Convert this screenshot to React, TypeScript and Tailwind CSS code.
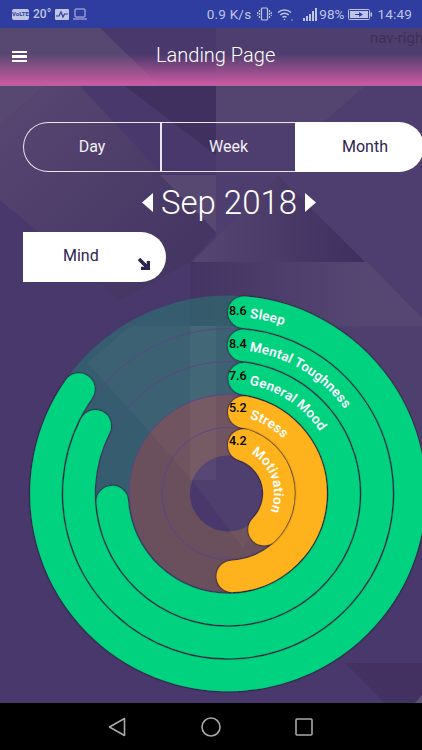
const GREEN = "#00d27f";
const ORANGE = "#feb31c";
const CX = 228;
const CY = 203.5;

function pt(r: number, deg: number) {
  const a = (deg * Math.PI) / 180;
  return [CX + r * Math.sin(a), CY - r * Math.cos(a)];
}

function arc(r: number, from: number, to: number) {
  const [x1, y1] = pt(r, from);
  const [x2, y2] = pt(r, to);
  const large = to - from > 180 ? 1 : 0;
  return `M${x1.toFixed(2)} ${y1.toFixed(2)} A${r} ${r} 0 ${large} 1 ${x2.toFixed(2)} ${y2.toFixed(2)}`;
}

const rings = [
  { id: "sleep", label: "Sleep", value: "8.6", r: 182, from: 5, to: 305, color: GREEN, textR: 177, textFrom: 7, vy: 25 },
  { id: "tough", label: "Mental Toughness", value: "8.4", r: 149, from: 6, to: 297, color: GREEN, textR: 144, textFrom: 8.5, vy: 58 },
  { id: "mood", label: "General Mood", value: "7.6", r: 116, from: 8, to: 266, color: GREEN, textR: 111, textFrom: 11, vy: 90 },
  { id: "stress", label: "Stress", value: "5.2", r: 83, from: 11, to: 177, color: ORANGE, textR: 78, textFrom: 16, vy: 122 },
  { id: "motiv", label: "Motivation", value: "4.2", r: 51, from: 18, to: 135, color: ORANGE, textR: 46, textFrom: 30, vy: 155 },
];

function Background() {
  return (
    <svg className="absolute inset-0" width="422" height="750" viewBox="0 0 422 750">
      <defs>
        <linearGradient id="peak" x1="0" x2="1" y1="0" y2="0">
          <stop offset="0" stopColor="#564672" />
          <stop offset="1" stopColor="#3f2f5f" />
        </linearGradient>
        <linearGradient id="band" x1="0" x2="1" y1="0" y2="0">
          <stop offset="0" stopColor="#443463" />
          <stop offset="0.75" stopColor="#564672" />
          <stop offset="1" stopColor="#564672" />
        </linearGradient>
        <linearGradient id="left" x1="0" x2="1" y1="0" y2="1">
          <stop offset="0" stopColor="#574771" />
          <stop offset="1" stopColor="#423260" />
        </linearGradient>
      </defs>
      <rect width="422" height="750" fill="#48386b" />
      <polygon points="216,28 422,28 422,326 216,326" fill="#4e3e6f" />
      <polygon points="0,125 45,86 80,86 216,232 190,262 120,300 0,200" fill="url(#left)" />
      <polygon points="0,28 100,28 160,86 45,86 0,125" fill="#574871" />
      <polygon points="125,86 216,86 216,155" fill="#3f3060" />
      <polygon points="216,86 365,86 320,125 216,125" fill="#544470" />
      <polygon points="160,175 216,175 216,232" fill="#574872" />
      <polygon points="192,262 278,175 365,262" fill="url(#peak)" />
      <polygon points="190,262 367,262 422,318 422,326 190,326" fill="url(#band)" />
      <polygon points="88,363 130,326 422,326 422,450 300,470 243,548 192,480" fill="#4f3f6f" />
      <polygon points="190,326 216,326 216,480 190,480" fill="#574775" />
      <polygon points="345,663 422,663 422,703 385,703" fill="#433261" />
      <polygon points="415,703 422,695 422,703" fill="#5e4f78" />
    </svg>
  );
}

function Chart() {
  return (
    <svg width="422" height="413" viewBox="0 0 422 413" className="block">
      <defs>
        <filter id="edge" filterUnits="userSpaceOnUse" x="0" y="0" width="422" height="413">
          <feDropShadow dx="0" dy="0" stdDeviation="1.300" floodColor="#000" floodOpacity="1" />
        </filter>
      </defs>
      <circle cx={CX} cy={CY} r="148.5" fill="none" stroke="rgba(0,210,130,0.24)" strokeWidth="99" />
      <circle cx={CX} cy={CY} r="68.5" fill="none" stroke="rgba(255,180,30,0.19)" strokeWidth="61" />
      {[66, 99, 132, 165].map((r) => (
        <circle key={r} cx={CX} cy={CY} r={r} fill="none" stroke="#5b4684" strokeWidth="1" />
      ))}
      {rings.map((ring) => (
        <path
          key={ring.id}
          d={arc(ring.r, ring.from, ring.to)}
          fill="none"
          stroke={ring.color}
          strokeWidth="31.500"
          strokeLinecap="round"
          filter="url(#edge)"
        />
      ))}
      {rings.map((ring) => (
        <g key={ring.id}>
          <path id={ring.id} d={arc(ring.textR, ring.textFrom, ring.textFrom + 170)} fill="none" />
          <text fontFamily="Roboto, sans-serif" fontSize="13.500" fontWeight="600" fill="#fff" letterSpacing="0.2">
            <textPath href={`#${ring.id}`}>{ring.label}</textPath>
          </text>
          <text x="229" y={ring.vy} fontFamily="Roboto, sans-serif" fontSize="12.500" fontWeight="500" fill="#000">
            {ring.value}
          </text>
        </g>
      ))}
    </svg>
  );
}

function StatusBar() {
  return (
    <div className="flex h-[28px] items-center bg-[#2e3d9f] pl-[12px] pr-[10px] text-[#bfc5e6]">
      <span className="flex h-[11px] w-[17px] items-center justify-center rounded-[2px] bg-[#bfc5e6] text-[6px] font-bold leading-none text-[#2e3d9f]">
        VoLTE
      </span>
      <span className="ml-[4px] text-[12px] font-medium">20°</span>
      <span className="ml-[4px] flex h-[11px] w-[14px] items-center justify-center rounded-[1px] bg-[#bfc5e6]">
        <svg width="12" height="8" viewBox="0 0 12 8" fill="none" stroke="#2e3d9f" strokeWidth="1.200">
          <path d="M0 6h3l2-4 2 5 1.500-3H12" />
        </svg>
      </span>
      <svg className="ml-[4px]" width="14" height="12" viewBox="0 0 14 12" fill="none" stroke="#bfc5e6" strokeWidth="1">
        <rect x="2" y="1" width="10" height="8" rx="0.500" />
        <path d="M0 11h14" />
      </svg>
      <span className="ml-auto text-[13.500px] tracking-[0.2px]">0.9 K/s</span>
      <svg className="ml-[6px]" width="15" height="14" viewBox="0 0 15 14" fill="none" stroke="#bfc5e6" strokeWidth="1.200">
        <rect x="4.500" y="1" width="6" height="12" rx="1" />
        <path d="M2.500 3v8M0.700 5v4M12.500 3v8M14.300 5v4" strokeDasharray="2 1" />
      </svg>
      <svg className="ml-[5px]" width="16" height="13" viewBox="0 0 16 13" fill="none" stroke="#bfc5e6" strokeWidth="1.400">
        <path d="M1 4.500a9.500 9.500 0 0 1 13 0M3.200 7a6.300 6.300 0 0 1 8.600 0M5.500 9.300a3 3 0 0 1 4 0" />
        <circle cx="7.500" cy="11.500" r="0.800" fill="#bfc5e6" stroke="none" />
        <circle cx="15" cy="12" r="0.700" fill="#bfc5e6" stroke="none" />
      </svg>
      <svg className="ml-[10px]" width="15" height="13" viewBox="0 0 15 13" fill="#bfc5e6">
        <rect x="0" y="10" width="2" height="3" />
        <rect x="3" y="8" width="2" height="5" />
        <rect x="6" y="6" width="2" height="7" />
        <rect x="9" y="3" width="2" height="10" />
        <rect x="12" y="0" width="2" height="13" />
      </svg>
      <span className="ml-[1px] text-[13.500px]">98%</span>
      <svg className="ml-[4px]" width="24" height="11" viewBox="0 0 24 11" fill="#bfc5e6">
        <rect x="0.500" y="0.500" width="21" height="10" rx="1" fill="none" stroke="#bfc5e6" />
        <rect x="2" y="2" width="18" height="7" />
        <rect x="22.500" y="3.500" width="1.500" height="4" />
        <path d="M7 5h4V3l4 2.500L11 8V6H7z" fill="#2e3d9f" />
      </svg>
      <span className="ml-[5px] text-[13.500px] tracking-[0.2px]">14:49</span>
    </div>
  );
}

function Tri({ right }: { right?: boolean }) {
  return (
    <svg width="11" height="19" viewBox="0 0 11 19" fill="#fff">
      <path d={right ? "M0 0L11 9.500L0 19Z" : "M11 0L0 9.500L11 19Z"} />
    </svg>
  );
}

export default function App() {
  return (
    <div className="relative h-[750px] w-[422px] overflow-hidden font-['Roboto',sans-serif]">
      <Background />
      <div className="relative flex h-full flex-col">
        <StatusBar />
        <header className="relative flex h-[58px] items-center border-b border-[#a36a9e] bg-gradient-to-b from-transparent from-45% to-[#cc5aa2] pl-[12px] pr-[10px]">
          <div className="flex w-[15px] flex-col gap-[2px]">
            <span className="h-[2.500px] bg-white" />
            <span className="h-[2.500px] bg-white" />
            <span className="h-[2.500px] bg-white" />
          </div>
          <h1 className="mb-[3px] ml-[129px] text-[20px] font-light leading-none text-white">Landing Page</h1>
          <span className="absolute left-[370px] top-[3px] text-[15px] leading-none whitespace-nowrap text-black/25">
            nav-right
          </span>
        </header>
        <div className="ml-[23px] mt-[36px] flex h-[50px] w-[401px] shrink-0 text-[16px]">
          <button className="w-[137px] rounded-l-[25px] border-[1.500px] border-r-0 border-[#e9e6f0] pb-[1px] text-[#f2f0f6]">Day</button>
          <button className="w-[135px] border-y-[1.500px] border-l-2 border-[#e9e6f0] pb-[1px] text-[#f2f0f6]">Week</button>
          <button className="flex-1 rounded-r-[25px] bg-white pb-[1px] pl-[11px] text-[#2d2450]">Month</button>
        </div>
        <div className="mt-[8px] flex h-[44px] shrink-0 items-center justify-center gap-[8px] pl-[36px]">
          <Tri />
          <span className="text-[33px] font-light leading-none text-white">Sep 2018</span>
          <Tri right />
        </div>
        <div className="ml-[23px] mt-[8px] flex h-[50px] w-[143px] shrink-0 rounded-r-[25px] bg-white pl-[40px] pt-[14px] text-[16px] leading-[20px] text-[#2d2450]">
          <span>Mind</span>
          <svg className="ml-[39px] mt-[12px]" width="12" height="12" viewBox="0 0 12 12" fill="none" stroke="#2d2450" strokeWidth="3.500">
            <path d="M1 1L9.500 9.500M10.500 3V10.500H3" />
          </svg>
        </div>
        <div className="mt-[8px] h-[413px] shrink-0">
          <Chart />
        </div>
        <nav className="flex h-[47px] shrink-0 items-center bg-black pl-[108px]">
          <svg width="18" height="20" viewBox="0 0 18 20" fill="none" stroke="#aaa" strokeWidth="1.600" strokeLinejoin="round">
            <path d="M16.500 1.500V18.500L1.500 10Z" />
          </svg>
          <svg className="ml-[75px]" width="20" height="20" viewBox="0 0 20 20" fill="none" stroke="#aaa" strokeWidth="1.600">
            <circle cx="10" cy="10" r="9" />
          </svg>
          <svg className="ml-[74px]" width="18" height="18" viewBox="0 0 18 18" fill="none" stroke="#aaa" strokeWidth="1.600">
            <rect x="1" y="1" width="16" height="16" rx="1" />
          </svg>
        </nav>
      </div>
    </div>
  );
}
